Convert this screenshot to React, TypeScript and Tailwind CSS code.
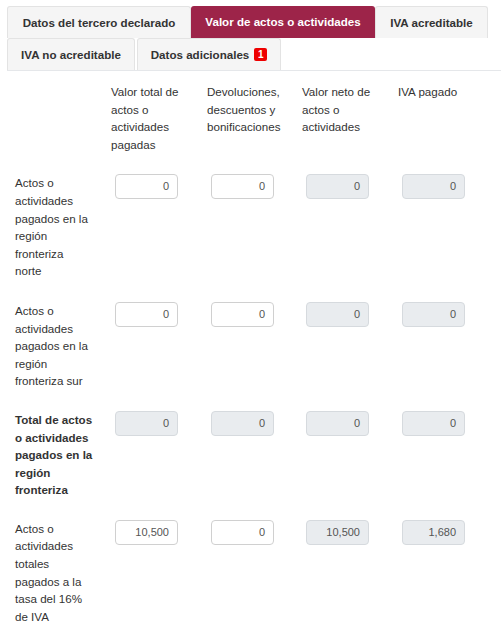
import React from 'react';

type Row = {
  label: string[];
  bold?: boolean;
  values: [string, string, string, string];
};

const rows: Row[] = [
  {
    label: ['Actos o', 'actividades', 'pagados en la', 'región', 'fronteriza', 'norte'],
    values: ['0', '0', '0', '0'],
  },
  {
    label: ['Actos o', 'actividades', 'pagados en la', 'región', 'fronteriza sur'],
    values: ['0', '0', '0', '0'],
  },
  {
    label: ['Total de actos', 'o actividades', 'pagados en la', 'región', 'fronteriza'],
    bold: true,
    values: ['0', '0', '0', '0'],
  },
  {
    label: ['Actos o', 'actividades', 'totales', 'pagados a la', 'tasa del 16%', 'de IVA'],
    values: ['10,500', '0', '10,500', '1,680'],
  },
];

const headers = [
  ['Valor total de', 'actos o', 'actividades', 'pagadas'],
  ['Devoluciones,', 'descuentos y', 'bonificaciones'],
  ['Valor neto de', 'actos o', 'actividades'],
  ['IVA pagado'],
];

function Lines({ lines }: { lines: string[] }) {
  return (
    <>
      {lines.map((l, i) => (
        <div key={i} className="whitespace-nowrap">
          {l}
        </div>
      ))}
    </>
  );
}

function Field({ value, readOnly }: { value: string; readOnly?: boolean }) {
  return (
    <div
      className={
        'h-[25px] w-[63px] rounded-[4px] border flex items-center justify-end pr-[8px] text-[11px] text-[#555] ' +
        (readOnly ? 'bg-[#e9ecef] border-[#d6dade]' : 'bg-white border-[#d0d0d0]')
      }
    >
      {value}
    </div>
  );
}

export default function App() {
  return (
    <div className="min-h-[623px] bg-white text-[#333] text-[11.6px] leading-[17.6px] font-['Liberation_Sans',Arial,sans-serif]">
      <div className="pl-[7px] pt-[6px]">
        <div className="flex flex-wrap border-b border-[#e5e7ea] font-bold">
          <div className="h-[32px] w-[184px] flex items-center justify-center border border-b-0 border-[#e3e3e3] rounded-t-[3px] bg-[#f5f5f5]">
            Datos del tercero declarado
          </div>
          <div className="h-[32px] w-[184px] flex items-center justify-center rounded-t-[3px] bg-[#9d2449] text-white">
            Valor de actos o actividades
          </div>
          <div className="h-[32px] w-[113px] flex items-center justify-center border border-b-0 border-[#e3e3e3] rounded-t-[3px] bg-[#f5f5f5]">
            IVA acreditable
          </div>
          <div className="h-[32px] w-[128px] flex items-center justify-center border border-b-0 border-[#e3e3e3] rounded-t-[3px] bg-[#f5f5f5]">
            IVA no acreditable
          </div>
          <div className="ml-[2px] h-[32px] w-[144px] flex items-center justify-center gap-[5px] border border-b-0 border-[#e3e3e3] rounded-t-[3px] bg-[#f5f5f5]">
            Datos adicionales
            <span className="h-[13px] w-[13px] flex items-center justify-center rounded-[2px] bg-[#ee0000] text-white text-[10px] leading-none">
              1
            </span>
          </div>
        </div>
      </div>

      <div className="pl-[15px] pt-[12px]">
        <div className="grid grid-cols-[96px_96px_95px_96px_96px]">
          <div />
          {headers.map((h, i) => (
            <div key={i}>
              <Lines lines={h} />
            </div>
          ))}
        </div>

        {rows.map((r, i) => (
          <div
            key={i}
            className={
              'grid grid-cols-[96px_96px_95px_96px_96px] ' +
              (i === 1 ? 'mt-[22px]' : 'mt-[21px]')
            }
          >
            <div className={r.bold ? 'font-bold' : ''}>
              <Lines lines={r.label} />
            </div>
            {r.values.map((v, j) => (
              <div key={j} className="pl-[4px]">
                <Field value={v} readOnly={r.bold || j >= 2} />
              </div>
            ))}
          </div>
        ))}
      </div>
    </div>
  );
}
